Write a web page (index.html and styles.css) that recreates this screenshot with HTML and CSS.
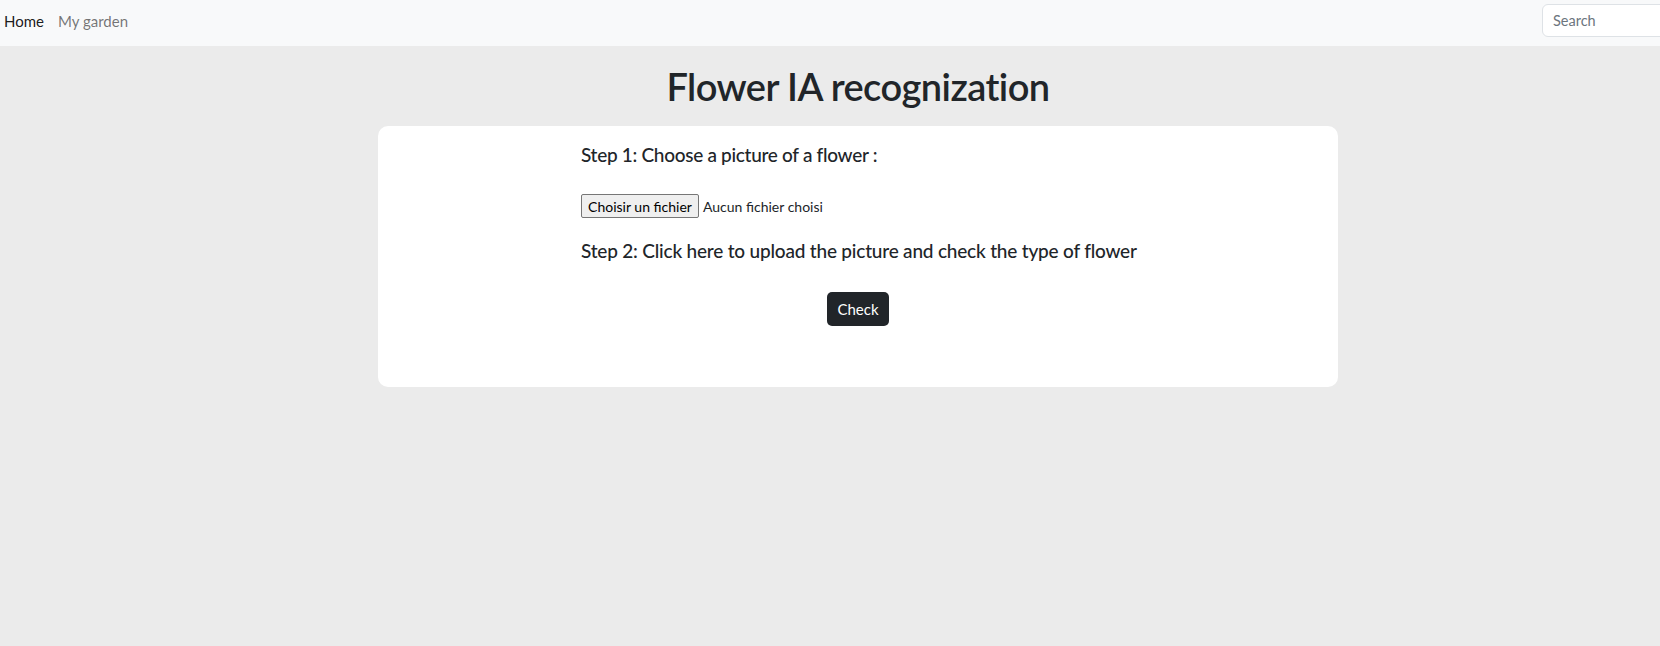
FILE: index.html
```html
<!DOCTYPE html>
<html lang="en">
<head>
<meta charset="utf-8">
<title>Flower IA recognization</title>
<link rel="stylesheet" href="styles.css">
</head>
<body>
<nav class="navbar">
  <div class="nav-links">
    <a class="nav-link active" href="#">Home</a>
    <a class="nav-link" href="#">My garden</a>
  </div>
  <form class="search-form">
    <input class="search-input" type="text" placeholder="Search">
  </form>
</nav>
<main class="main">
  <h1 class="title">Flower IA recognization</h1>
  <section class="card">
    <div class="col">
      <h5 class="step step-one">Step 1: Choose a picture of a flower :</h5>
      <div class="file-input">
        <span class="file-btn">Choisir un fichier</span>
        <span class="file-name">Aucun fichier choisi</span>
      </div>
      <h5 class="step step-two">Step 2: Click here to upload the picture and check the type of flower</h5>
      <div class="check-row">
        <button class="check-btn" type="button">Check</button>
      </div>
    </div>
  </section>
</main>
</body>
</html>
```

FILE: styles.css
```css
* { box-sizing: border-box; }
html, body { margin: 0; padding: 0; }
body {
  background: #ebebeb;
  color: #212529;
  font-family: Lato, "Open Sans", sans-serif;
  font-size: 16px;
  overflow: hidden;
  width: 1660px;
  height: 646px;
}
.navbar {
  height: 46px;
  background: #f8f9fa;
  display: flex;
  align-items: flex-start;
  overflow: hidden;
}
.nav-links {
  display: flex;
  gap: 14px;
  padding-left: 4px;
  padding-top: 9px;
}
.nav-link {
  text-decoration: none;
  color: rgba(0,0,0,0.55);
  font-size: 15px;
  line-height: 24px;
}
.nav-link.active { color: rgba(0,0,0,0.9); }
.search-form {
  margin-left: auto;
  margin-right: -90px;
  padding-top: 4px;
}
.search-input {
  display: block;
  width: 208px;
  height: 33px;
  margin: 0;
  border: 1px solid #dee2e6;
  border-radius: 6px;
  background: #fff;
  padding: 0 10px;
  font-family: inherit;
  font-size: 14.5px;
  color: #212529;
}
.search-input::placeholder { color: #6c757d; }
.main {
  margin-left: 378px;
  width: 960px;
}
.title {
  margin: 16px 0 16px;
  text-align: center;
  font-size: 38px;
  letter-spacing: -0.55px;
  line-height: 48px;
  font-weight: 600;
}
.card {
  background: #fff;
  border-radius: 10px;
  height: 261px;
  display: flex;
  justify-content: center;
}
.col {
  width: 554px;
  padding-top: 17px;
  display: flex;
  flex-direction: column;
}
.step {
  margin: 0;
  font-size: 19px;
  letter-spacing: -0.3px;
  line-height: 24px;
  font-weight: 500;
  white-space: nowrap;
}
.file-input {
  margin-top: 27px;
  display: flex;
  align-items: center;
  gap: 4px;
  font-size: 14px;
}
.file-btn {
  height: 24px;
  width: 118px;
  display: flex;
  align-items: center;
  justify-content: center;
  background: #efefef;
  border: 1px solid #767676;
  border-radius: 2px;
  color: #000;
  white-space: nowrap;
  font-size: 14px;
}
.file-name { color: #212529; white-space: nowrap; }
.step-two { margin-top: 21px; letter-spacing: -0.2px; }
.check-row {
  margin-top: 29px;
  display: flex;
  justify-content: center;
}
.check-btn {
  width: 62px;
  height: 34px;
  background: #212529;
  color: #fff;
  border: none;
  border-radius: 5px;
  font-family: inherit;
  font-size: 15px;
  padding: 0;
}
```
